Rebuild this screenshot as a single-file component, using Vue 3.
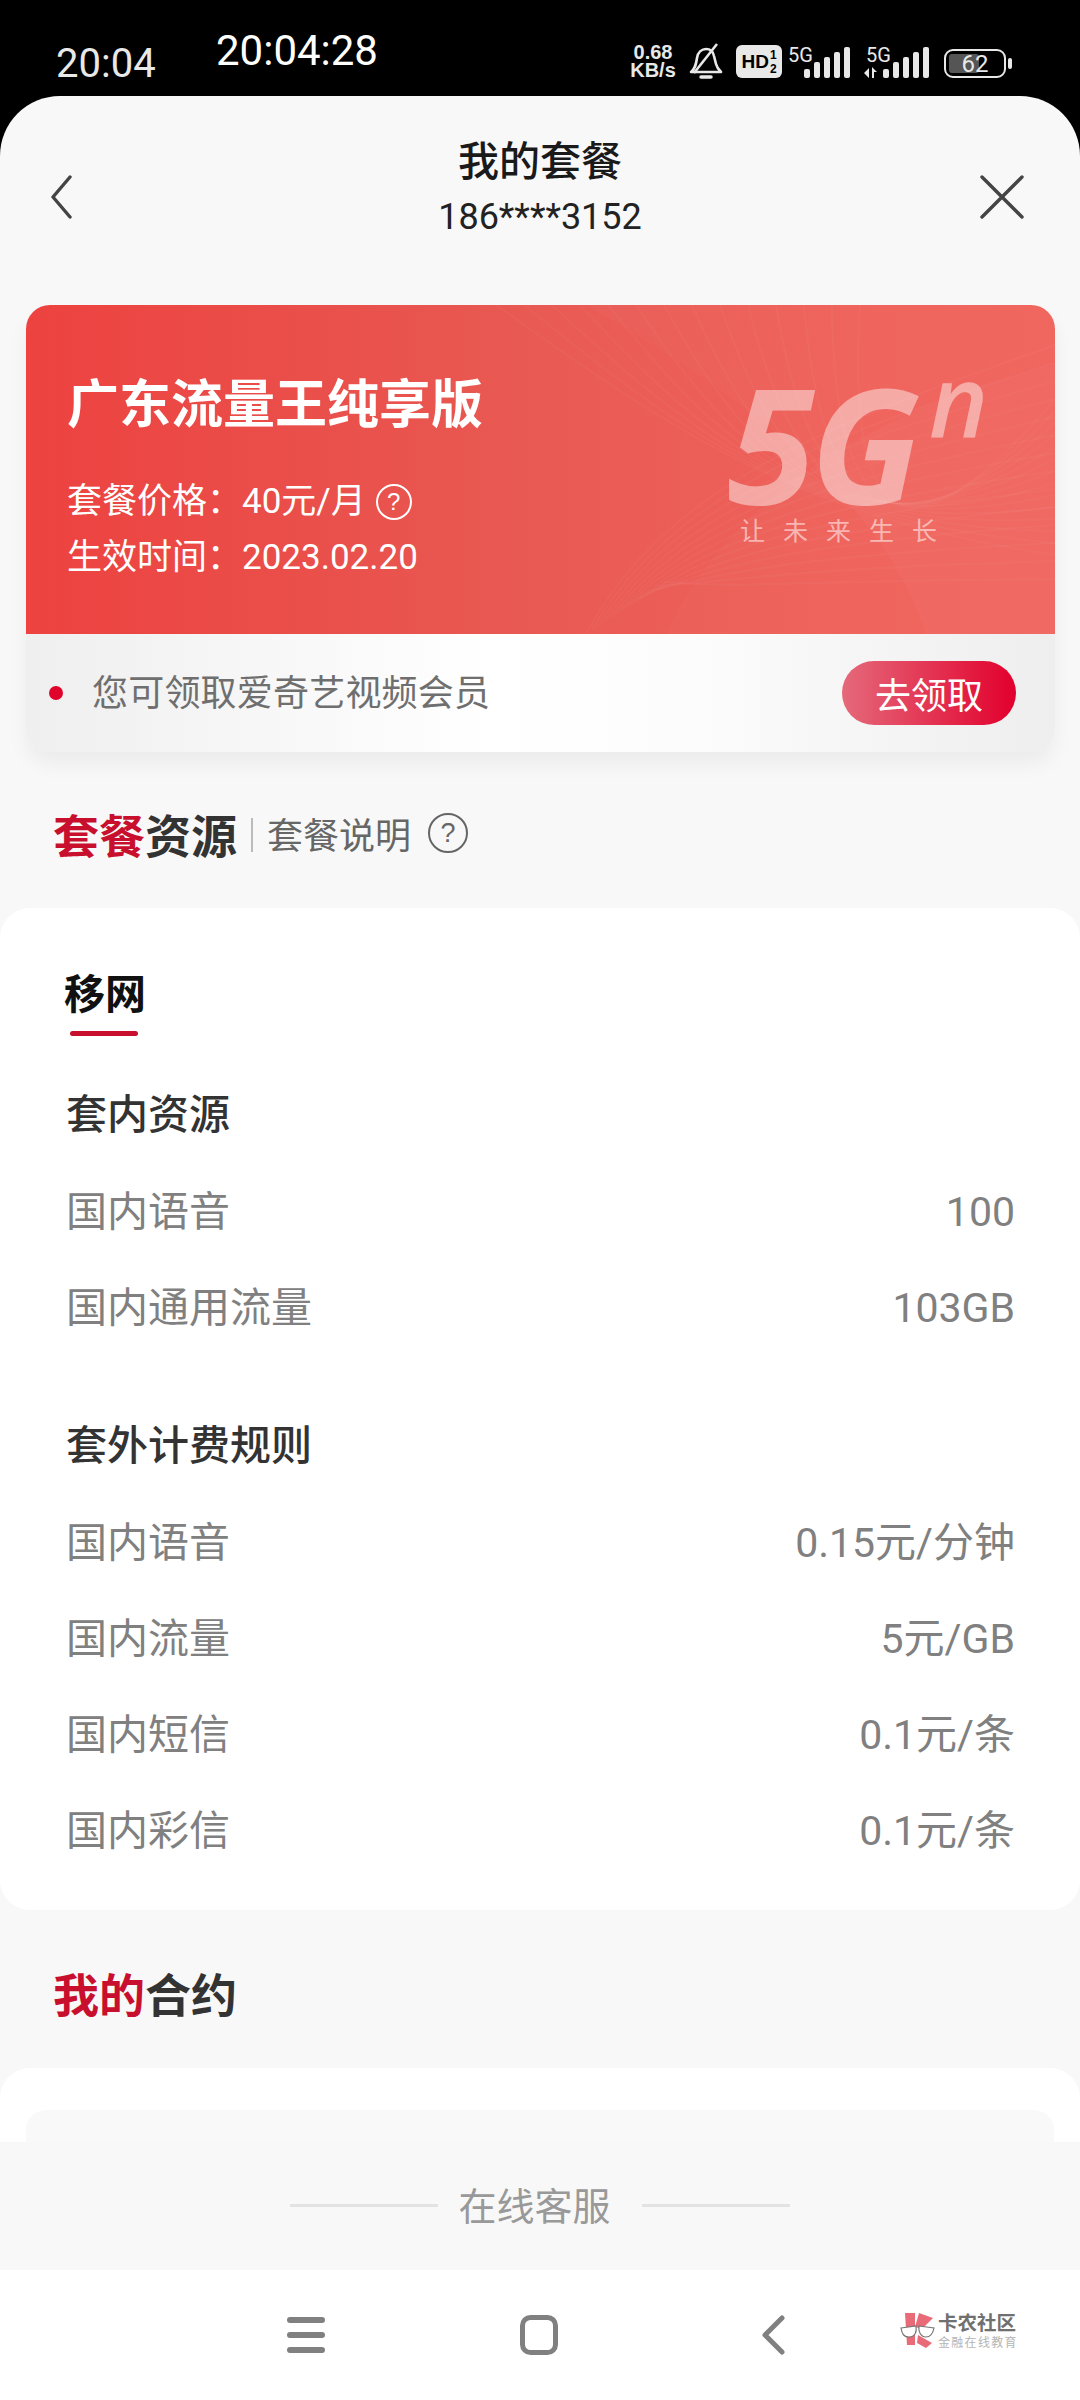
<template>
  <div class="phone">
    <!-- barra de estado -->
    <div class="status">
      <span class="clock">20:04</span>
      <span class="clock-big">20:04:28</span>
      <div class="status-right">
        <div class="speed"><b>0.68</b><b>KB/s</b></div>
        <svg class="bell" width="34" height="38" viewBox="0 0 34 38" fill="none" stroke="#e8e8e8" stroke-width="2.6">
          <path d="M2 30c4-3 5-7 6-14 1-6 5-9 9-9s7 2 8 7l2 8c1 4 3 6 5 8z" stroke-linejoin="round" />
          <path d="M5 31L28 2" />
          <path d="M12 35h10" stroke-width="3.5" stroke-linecap="round" />
        </svg>
        <div class="hd"><b>HD</b><span class="hd-nums"><b>1</b><b>2</b></span></div>
        <div class="signal">
          <span class="net">5G</span>
          <svg width="47" height="31" viewBox="0 0 47 31" fill="#e8e8e8">
            <rect x="0" y="22" width="6" height="9" rx="2" />
            <rect x="10" y="15" width="6" height="16" rx="2" />
            <rect x="20" y="10" width="6" height="21" rx="2" />
            <rect x="30" y="5" width="6" height="26" rx="2" />
            <rect x="40" y="0" width="6" height="31" rx="2" />
          </svg>
        </div>
        <div class="signal second">
          <span class="net">5G</span>
          <svg width="65" height="31" viewBox="0 0 65 31" fill="#e8e8e8">
            <path d="M5 21v10l-5-5zM8 20l5 5h-3v6H8z" />
            <rect x="19" y="22" width="6" height="9" rx="2" />
            <rect x="29" y="15" width="6" height="16" rx="2" />
            <rect x="39" y="10" width="6" height="21" rx="2" />
            <rect x="49" y="5" width="6" height="26" rx="2" />
            <rect x="59" y="0" width="6" height="31" rx="2" />
          </svg>
        </div>
        <div class="battery">
          <div class="battery-body"><span class="battery-fill"></span><span class="battery-num">62</span></div>
          <span class="battery-tip"></span>
        </div>
      </div>
    </div>

    <div class="sheet">
      <div class="header">
        <svg class="nav-icon" width="22" height="44" viewBox="0 0 22 44" fill="none" stroke="#444" stroke-width="3.4" stroke-linecap="round" stroke-linejoin="round">
          <path d="M20 2L3 22l17 20" />
        </svg>
        <div class="header-title">
          <div class="title">我的套餐</div>
          <div class="phone-num">186****3152</div>
        </div>
        <svg class="nav-icon" width="44" height="44" viewBox="0 0 44 44" fill="none" stroke="#444" stroke-width="3.4" stroke-linecap="round">
          <path d="M2 2l40 40M42 2L2 42" />
        </svg>
      </div>

      <div class="scroll">
        <div class="plan-card">
          <div class="plan-top">
            <svg class="waves" viewBox="0 0 1029 329" preserveAspectRatio="none" fill="none" stroke="#fff">
              <path d="M560 0H1029V329H900C860 200 720 90 560 0z" fill="#fff" fill-opacity="0.025" stroke="none" />
              <path d="M640 329C700 200 830 110 1029 60V329z" fill="#fff" fill-opacity="0.02" stroke="none" />
              <path v-for="w in waves" :key="w" :d="w" stroke-opacity="0.03" stroke-width="2" />
            </svg>
            <div class="plan-info">
              <div class="plan-name">广东流量王纯享版</div>
              <div class="plan-line">
                <span>套餐价格：40元/月</span>
                <span class="help help-light">?</span>
              </div>
              <div class="plan-line"><span>生效时间：2023.02.20</span></div>
            </div>
            <div class="logo5g">
              <div class="logo-main">5G<i>n</i></div>
              <div class="logo-sub">让未来生长</div>
            </div>
          </div>
          <div class="plan-bottom">
            <span class="dot"></span>
            <span class="plan-tip">您可领取爱奇艺视频会员</span>
            <button class="get-btn">去领取</button>
          </div>
        </div>

        <div class="section-head">
          <span class="head-title"><em>套餐</em>资源</span>
          <span class="head-sep"></span>
          <span class="head-link">套餐说明</span>
          <span class="help help-dark">?</span>
        </div>

        <div class="panel">
          <div class="tab">移网</div>
          <div class="group-title first">套内资源</div>
          <div v-for="r in inRows" :key="r.name" class="row">
            <span>{{ r.name }}</span><span>{{ r.value }}</span>
          </div>
          <div class="group-title second-group">套外计费规则</div>
          <div v-for="r in outRows" :key="r.name" class="row">
            <span>{{ r.name }}</span><span>{{ r.value }}</span>
          </div>
        </div>

        <div class="section-head contract-head">
          <span class="head-title"><em>我的</em>合约</span>
        </div>

        <div class="panel contract">
          <div class="contract-box"></div>
        </div>
      </div>

      <div class="service">
        <span class="service-line"></span>
        <span class="service-text">在线客服</span>
        <span class="service-line"></span>
      </div>
    </div>

    <!-- barra de navegacion -->
    <div class="navbar">
      <svg class="nav-menu" width="38" height="36" viewBox="0 0 38 36" fill="#808080">
        <rect x="0" y="0" width="38" height="6" rx="3" />
        <rect x="0" y="15" width="38" height="6" rx="3" />
        <rect x="0" y="30" width="38" height="6" rx="3" />
      </svg>
      <svg class="nav-home" width="38" height="40" viewBox="0 0 38 40" fill="none" stroke="#808080" stroke-width="5">
        <rect x="2.5" y="2.5" width="33" height="35" rx="8" />
      </svg>
      <svg class="nav-back" width="24" height="40" viewBox="0 0 24 40" fill="none" stroke="#808080" stroke-width="5" stroke-linecap="round" stroke-linejoin="round">
        <path d="M21 3L4 20l17 17" />
      </svg>
      <div class="brand">
        <svg width="35" height="35" viewBox="0 0 35 35">
          <path d="M5 0h10v32H7z" fill="#ea6b78" />
          <path d="M19 0l14 5-11 11-7-2z" fill="#ea6b78" />
          <path d="M18 22l14 8-6 5-9-5z" fill="#ea6b78" />
          <path d="M1 15l15-2c1 6-1 11-7 11S2 20 1 15zM19 13l15 2c-1 5-3 9-8 9s-8-5-7-11z" fill="#fff" stroke="#777" stroke-width="1.2" />
        </svg>
        <div class="brand-text">
          <div class="brand-name">卡农社区</div>
          <div class="brand-sub">金融在线教育</div>
        </div>
      </div>
    </div>
  </div>
</template>

<script setup>
const inRows = [
  { name: '国内语音', value: '100' },
  { name: '国内通用流量', value: '103GB' }
]

const outRows = [
  { name: '国内语音', value: '0.15元/分钟' },
  { name: '国内流量', value: '5元/GB' },
  { name: '国内短信', value: '0.1元/条' },
  { name: '国内彩信', value: '0.1元/条' }
]

// lineas finas del fondo de la tarjeta
const waves = []
for (let i = 0; i < 14; i++) {
  waves.push(`M${470 + i * 28} 0C${640 + i * 14} ${120 + i * 6} ${760 + i * 8} ${210 + i * 6} 1029 ${250 - i * 12}`)
  waves.push(`M${560 + i * 6} ${329 - i * 4}C${640 + i * 6} ${180 + i * 8} ${800 - i * 4} ${120 + i * 12} 1029 ${40 + i * 18}`)
}
</script>

<style>
html, body {
  margin: 0;
  background: #000;
}
</style>

<style scoped>
.phone {
  width: 1080px;
  height: 2400px;
  display: flex;
  flex-direction: column;
  overflow: hidden;
  background: #000;
  font-family: Roboto, "Noto Sans CJK SC", sans-serif;
}

.status {
  height: 96px;
  flex: none;
  position: relative;
  display: flex;
  align-items: center;
  justify-content: space-between;
  padding: 0 68px 0 56px;
  box-sizing: border-box;
  color: #e8e8e8;
}

.clock {
  font-size: 40px;
  margin-top: 30px;
}

.clock-big {
  position: absolute;
  left: 216px;
  top: 26px;
  font-size: 42px;
  color: #fff;
}

.status-right {
  display: flex;
  align-items: flex-end;
  margin-top: 20px;
  height: 46px;
}

.speed {
  display: flex;
  flex-direction: column;
  width: 48px;
  font-size: 20px;
  line-height: 18px;
  font-family: "Liberation Sans", sans-serif;
  align-items: center;
  margin-bottom: 2px;
}

.bell {
  margin-left: 12px;
  margin-bottom: 1px;
}

.hd {
  margin-left: 13px;
  width: 46px;
  height: 33px;
  margin-bottom: 3px;
  border-radius: 6px;
  background: #e8e8e8;
  color: #000;
  font-family: "Liberation Sans", sans-serif;
  font-size: 19px;
  display: flex;
  align-items: center;
  justify-content: center;
}

.hd-nums {
  display: flex;
  flex-direction: column;
  font-size: 12px;
  line-height: 14px;
  margin-left: 1px;
}

.signal {
  position: relative;
  margin-left: 6px;
  display: flex;
  align-items: flex-end;
  margin-bottom: 3px;
}

.signal .net {
  position: absolute;
  left: 0;
  top: -2px;
  font-size: 20px;
  line-height: 20px;
}

.signal svg {
  margin-left: 16px;
}

.signal.second {
  margin-left: 13px;
}

.signal.second .net {
  left: 2px;
}

.signal.second svg {
  margin-left: 0;
}

.battery {
  display: flex;
  align-items: center;
  margin-left: 15px;
  margin-bottom: 3px;
}

.battery-body {
  position: relative;
  width: 62px;
  height: 29px;
  box-sizing: border-box;
  border: 2.5px solid #e8e8e8;
  border-radius: 9px;
  display: flex;
  align-items: center;
  justify-content: center;
}

.battery-fill {
  position: absolute;
  left: 3px;
  top: 3px;
  bottom: 3px;
  width: 30px;
  border-radius: 3px;
  background: #555;
}

.battery-num {
  position: relative;
  font-size: 24px;
  line-height: 24px;
}

.battery-tip {
  width: 4px;
  height: 11px;
  margin-left: 2px;
  border-radius: 2px;
  background: #e8e8e8;
}

.sheet {
  flex: 1;
  min-height: 0;
  display: flex;
  flex-direction: column;
  background: #f8f8f8;
  border-radius: 60px 60px 0 0;
  overflow: hidden;
}

.header {
  height: 209px;
  flex: none;
  box-sizing: border-box;
  padding: 0 56px 0 50px;
  display: flex;
  justify-content: space-between;
  align-items: flex-start;
  position: relative;
}

.nav-icon {
  margin-top: 79px;
}

.header-title {
  position: absolute;
  left: 0;
  right: 0;
  top: 39px;
  text-align: center;
}

.title {
  font-size: 41px;
  line-height: 54px;
  font-weight: 500;
  color: #1a1a1a;
}

.phone-num {
  font-size: 36px;
  line-height: 50px;
  margin-top: 3px;
  color: #222;
}

.scroll {
  flex: 1;
  min-height: 0;
  overflow: hidden;
}

.plan-card {
  margin: 0 25px 0 26px;
  border-radius: 24px;
  overflow: hidden;
  box-shadow: 0 12px 20px rgba(0, 0, 0, 0.05);
}

.plan-top {
  position: relative;
  height: 329px;
  background: linear-gradient(90deg, #ed4240, #e85a53 50%, #ef625b 80%, #f0645d);
  color: #fff;
  display: flex;
  justify-content: space-between;
}

.waves {
  position: absolute;
  inset: 0;
  width: 100%;
  height: 100%;
}

.plan-info {
  position: relative;
  padding: 66px 0 0 41px;
}

.plan-name {
  font-size: 52px;
  line-height: 70px;
  font-weight: 700;
  margin-bottom: 33px;
}

.plan-line {
  display: flex;
  align-items: center;
  font-size: 35px;
  line-height: 56px;
}

.help {
  display: inline-flex;
  align-items: center;
  justify-content: center;
  box-sizing: border-box;
  border-radius: 50%;
  font-family: "Liberation Sans", sans-serif;
}

.help-light {
  width: 36px;
  height: 36px;
  margin-left: 10px;
  border: 2px solid #fff;
  font-size: 24px;
}

.logo5g {
  position: relative;
  width: 270px;
  margin: 73px 58px 0 0;
  color: rgba(255, 255, 255, 0.45);
}

.logo-main {
  font-family: "Open Sans", sans-serif;
  font-size: 160px;
  font-weight: 700;
  font-style: italic;
  line-height: 128px;
  letter-spacing: -5px;
  white-space: nowrap;
  position: relative;
}

.logo-main i {
  position: absolute;
  left: 202px;
  top: -30px;
  font-size: 100px;
  line-height: 100px;
  letter-spacing: 0;
  font-weight: 600;
}

.logo-sub {
  font-size: 25px;
  line-height: 30px;
  letter-spacing: 18px;
  margin: 11px 0 0 13px;
  white-space: nowrap;
  color: rgba(255, 255, 255, 0.55);
}

.plan-bottom {
  height: 118px;
  background: linear-gradient(90deg, #efefef, #fff 45%, #fcfcfc 65%, #eeeeef);
  display: flex;
  align-items: center;
  padding: 0 39px 0 23px;
}

.dot {
  width: 14px;
  height: 14px;
  border-radius: 50%;
  background: #e0042d;
}

.plan-tip {
  margin-left: 29px;
  padding-bottom: 6px;
  font-size: 36px;
  letter-spacing: 0.2px;
  color: #6f6f6f;
  flex: 1;
}

.get-btn {
  width: 174px;
  height: 64px;
  border: none;
  border-radius: 32px;
  padding: 0;
  background: linear-gradient(90deg, #e5697a, #e2002d);
  color: #fff;
  font-size: 36px;
  font-family: inherit;
}

.section-head {
  display: flex;
  align-items: center;
  height: 74px;
  margin: 44px 0 38px 53px;
}

.head-title {
  font-size: 46px;
  font-weight: 700;
  color: #333;
}

.head-title em {
  font-style: normal;
  color: #c8102e;
}

.head-sep {
  width: 2px;
  height: 34px;
  margin: 4px 14px 0 14px;
  background: #bbb;
}

.head-link {
  font-size: 36px;
  color: #666;
}

.help-dark {
  width: 40px;
  height: 40px;
  margin-left: 17px;
  border: 2px solid #666;
  color: #666;
  font-size: 27px;
}

.panel {
  background: #fff;
  border-radius: 30px;
  padding: 62px 65px 0 66px;
  height: 1002px;
  box-sizing: border-box;
}

.tab {
  position: relative;
  font-size: 41px;
  font-weight: 700;
  line-height: 50px;
  margin-left: -2px;
  color: #111;
  width: 84px;
  padding-bottom: 16px;
}

.tab::after {
  content: "";
  position: absolute;
  left: 6px;
  bottom: 0;
  width: 68px;
  height: 5px;
  border-radius: 3px;
  background: #c8102e;
}

.group-title {
  font-size: 41px;
  font-weight: 500;
  color: #333;
  line-height: 56px;
}

.group-title.first {
  margin-top: 51px;
  margin-bottom: 21px;
}

.group-title.second-group {
  margin-top: 62px;
  margin-bottom: 21px;
}

.row {
  height: 96px;
  display: flex;
  align-items: center;
  justify-content: space-between;
  font-size: 41px;
  line-height: 48px;
  color: #808080;
}

.contract-head {
  margin: 45px 0 39px 53px;
}

.panel.contract {
  height: 200px;
  padding: 42px 26px 0;
}

.contract-box {
  height: 150px;
  background: #f9f9f9;
  border-radius: 20px;
}

.service {
  height: 128px;
  flex: none;
  background: #f8f8f8;
  box-sizing: border-box;
  padding-bottom: 6px;
  display: flex;
  align-items: center;
  justify-content: center;
  gap: 20px;
}

.service-line {
  width: 148px;
  height: 3px;
  margin-top: 4px;
  background: #e3e3e3;
}

.service-text {
  font-size: 38px;
  margin-right: 11px;
  color: #999;
}

.navbar {
  height: 130px;
  flex: none;
  position: relative;
  background: #fff;
  display: flex;
  align-items: center;
  padding: 0 0 0 287px;
}

.nav-home {
  margin-left: 195px;
}

.nav-back {
  margin-left: 203px;
}

.brand {
  position: absolute;
  left: 900px;
  top: 43px;
  display: flex;
  gap: 3px;
}

.brand-text {
  white-space: nowrap;
}

.brand-name {
  font-size: 19.5px;
  line-height: 22px;
  font-weight: 700;
  color: #707070;
}

.brand-sub {
  font-size: 12px;
  line-height: 16px;
  color: #b5b5b5;
  letter-spacing: 1.3px;
}
</style>
